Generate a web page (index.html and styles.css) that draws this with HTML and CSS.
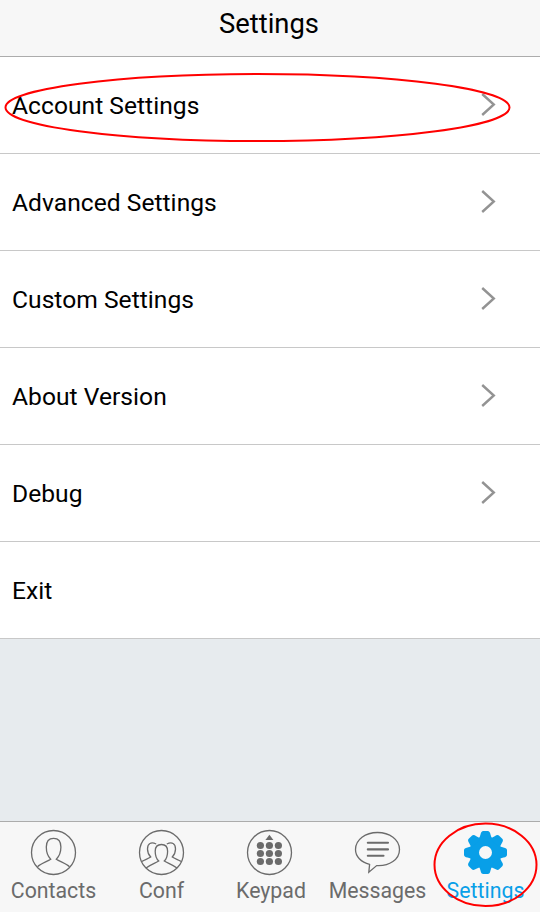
FILE: index.html
```html
<!DOCTYPE html>
<html lang="en">
<head>
<meta charset="utf-8">
<title>Settings</title>
<link rel="stylesheet" href="styles.css">
</head>
<body>
<div class="app">
  <header class="header"><h1 class="title">Settings</h1></header>
  <main class="content">
    <ul class="list">
      <li class="row"><span class="row-label">Account Settings</span><svg class="chevron" viewBox="0 0 16 24"><path d="M2.2 1 13.8 11.5 2.2 22"/></svg></li>
      <li class="row"><span class="row-label">Advanced Settings</span><svg class="chevron" viewBox="0 0 16 24"><path d="M2.2 1 13.8 11.5 2.2 22"/></svg></li>
      <li class="row"><span class="row-label">Custom Settings</span><svg class="chevron" viewBox="0 0 16 24"><path d="M2.2 1 13.8 11.5 2.2 22"/></svg></li>
      <li class="row"><span class="row-label">About Version</span><svg class="chevron" viewBox="0 0 16 24"><path d="M2.2 1 13.8 11.5 2.2 22"/></svg></li>
      <li class="row"><span class="row-label">Debug</span><svg class="chevron" viewBox="0 0 16 24"><path d="M2.2 1 13.8 11.5 2.2 22"/></svg></li>
      <li class="row"><span class="row-label">Exit</span></li>
    </ul>
  </main>
  <nav class="tabs">
    <a class="tab">
      <svg class="icon" viewBox="0 0 108 54"><circle cx="53.5" cy="30.5" r="22"/><path d="M37.5 44.7C41 41.5 47 39.6 50.7 37.2C48 34.5 46.3 31.5 46.3 25C46.3 19.5 49 16.4 53.6 16.4S60.9 19.5 60.9 25C60.9 31.5 59 34.5 56.3 37.2C60 39.6 66 41.5 69.5 44.7"/></svg>
      <span class="tab-label">Contacts</span>
    </a>
    <a class="tab">
      <svg class="icon" viewBox="0 0 108 54"><circle cx="53.5" cy="30.5" r="22"/><path d="M38 46C42 42.8 47 41.2 50.7 39C48.4 36.8 47.2 34 47.2 29.2C47.2 25 49.6 22.5 53.5 22.5S59.6 25 59.6 29.2C59.6 34 58.6 36.8 56.3 39C60 41.2 65 42.8 69 46M48.2 22C43 19.6 39.5 21.5 39.5 27C39.5 31 40.8 33 42.7 35C40 36.8 37 37.6 34 39.4M58.8 22C64 19.6 67.5 21.5 67.5 27C67.5 31 66.2 33 64.3 35C67 36.8 70 37.6 73 39.4"/></svg>
      <span class="tab-label">Conf</span>
    </a>
    <a class="tab">
      <svg class="icon" viewBox="0 0 108 54"><circle cx="53.5" cy="30.5" r="22"/><g class="solid"><path d="M53.4 12.8 57.4 18H49.4Z"/><circle cx="44.4" cy="23.5" r="3.6"/><circle cx="53.4" cy="23.5" r="3.6"/><circle cx="62.4" cy="23.5" r="3.6"/><circle cx="44.4" cy="31.5" r="3.6"/><circle cx="53.4" cy="31.5" r="3.6"/><circle cx="62.4" cy="31.5" r="3.6"/><circle cx="44.4" cy="39.5" r="3.6"/><circle cx="53.4" cy="39.5" r="3.6"/><circle cx="62.4" cy="39.5" r="3.6"/></g></svg>
      <span class="tab-label tab-label-keypad">Keypad</span>
    </a>
    <a class="tab">
      <svg class="icon" viewBox="0 0 108 54"><path d="M45.6 42.4C37 40.3 31.5 34.5 31.5 27.5C31.5 17.5 41.5 10.5 53.5 10.5S75.5 17.5 75.5 27.5C75.5 37.5 65.5 44.3 52.7 43.6L44.8 50.2Z"/><path class="bar" d="M43.8 20.8H64M43.8 27.4H64M43.8 33.8H59.5"/></svg>
      <span class="tab-label">Messages</span>
    </a>
    <a class="tab tab-active">
      <svg class="icon" viewBox="0 0 108 54">
        <defs><path id="tooth" d="M-7-13Q-5.6-15.5-5-18Q-4.4-21.5-2.2-21.5H2.2Q4.4-21.5 5-18Q5.6-15.5 7-13Z"/></defs>
        <g class="gear" transform="translate(53.5 30.5)"><circle r="11.2" class="ring"/><use href="#tooth"/><use href="#tooth" transform="rotate(45)"/><use href="#tooth" transform="rotate(90)"/><use href="#tooth" transform="rotate(135)"/><use href="#tooth" transform="rotate(180)"/><use href="#tooth" transform="rotate(225)"/><use href="#tooth" transform="rotate(270)"/><use href="#tooth" transform="rotate(315)"/></g>
      </svg>
      <span class="tab-label">Settings</span>
    </a>
  </nav>
  <svg class="marks" viewBox="0 0 540 912"><ellipse cx="257.5" cy="107.5" rx="252" ry="33.5"/><ellipse cx="485.5" cy="864.8" rx="51" ry="41.2"/></svg>
</div>
</body>
</html>
```
FILE: styles.css
```css
* { box-sizing: border-box; }
body { margin: 0; font-family: Roboto, "Liberation Sans", sans-serif; color: #000; }
.app { position: relative; display: flex; flex-direction: column; width: 540px; height: 912px; overflow: hidden; background: #e7ebee; }
.header { flex: none; height: 57px; padding-right: 2px; background: #f7f7f7; border-bottom: 1px solid #acacac; text-align: center; }
.title { margin: 0; font-size: 27.4px; line-height: 48px; font-weight: 400; }
.content { flex: 1; }
.list { margin: 0; padding: 0; list-style: none; }
.row { display: flex; align-items: center; justify-content: space-between; height: 97px; padding: 0 44px 0 12px; background: #fff; border-bottom: 1px solid #c8c8c8; }
.row-label { font-size: 24.6px; line-height: 30px; letter-spacing: 0.03px; padding-top: 1px; }
.chevron { width: 16px; height: 24px; fill: none; stroke: #939393; stroke-width: 2.4; }
.tabs { flex: none; display: grid; grid-template-columns: repeat(5, 108px); height: 91px; background: #f7f7f7; border-top: 1px solid #acacac; }
.tab { display: flex; flex-direction: column; align-items: center; color: #6b6b6b; }
.icon { width: 108px; height: 54px; fill: none; stroke: currentColor; stroke-width: 1.3; }
.solid { fill: currentColor; stroke: none; }
.bar { stroke-width: 2.1; stroke-linecap: round; }
.gear { fill: currentColor; stroke: none; }
.ring { fill: none; stroke: currentColor; stroke-width: 9.4; }
.tab-label { font-size: 21.3px; line-height: 30px; padding-right: 1px; }
.tab-label-keypad { padding: 0 0 0 2px; }
.tab-active { color: #089fe8; }
.marks { position: absolute; inset: 0; width: 540px; height: 912px; fill: none; stroke: #f00; stroke-width: 2; pointer-events: none; }
```
